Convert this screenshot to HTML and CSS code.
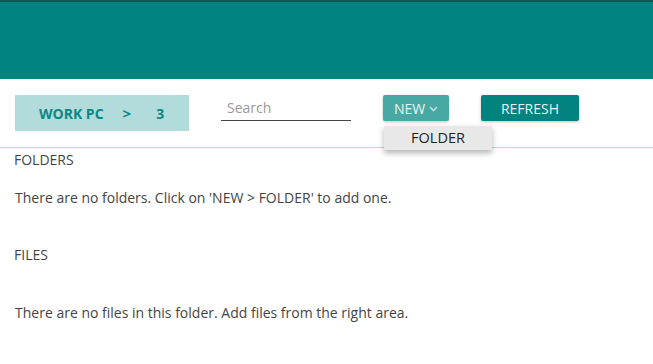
FILE: index.html
```html
<!DOCTYPE html>
<html>
<head>
<meta charset="utf-8">
<link rel="stylesheet" href="styles.css">
</head>
<body>
<header class="topbar"></header>
<div class="toolbar">
  <div class="crumbs">
    <span class="crumb">WORK PC</span>
    <span class="sep">&gt;</span>
    <span class="crumb">3</span>
  </div>
  <input class="search" type="text" placeholder="Search">
  <div class="new-wrap">
    <button class="btn btn-new">NEW <svg class="chev" width="9" height="6" viewBox="0 0 9 6"><path d="M1 1 L4.5 4.5 L8 1" fill="none" stroke="#b9e0de" stroke-width="1.6"/></svg></button>
    <div class="menu"><div class="menu-item">FOLDER</div></div>
  </div>
  <button class="btn btn-refresh">REFRESH</button>
</div>
<main class="content">
  <div class="section-title">FOLDERS</div>
  <p class="empty">There are no folders. Click on 'NEW &gt; FOLDER' to add one.</p>
  <div class="section-title files">FILES</div>
  <p class="empty files-empty">There are no files in this folder. Add files from the right area.</p>
</main>
</body>
</html>
```

FILE: styles.css
```css
* { box-sizing: border-box; }
body {
  margin: 0;
  font-family: "Open Sans", "Liberation Sans", sans-serif;
  color: #333;
  background: #fff;
}
.topbar {
  height: 79px;
  background: #038380;
  border-top: 2px solid #0b5656;
}
.toolbar {
  display: flex;
  align-items: flex-start;
  padding: 16px 0 0 15px;
  height: 69px;
  border-bottom: 1px solid #b2dcdb;
}
.crumbs {
  width: 174px;
  height: 36px;
  background: #b2dcdb;
  display: flex;
  align-items: center;
  padding-left: 24px;
  color: #0a8785;
  font-weight: 700;
  font-size: 14px;
}
.sep { margin-left: 19px; font-size: 15px; }
.crumbs .sep + .crumb { margin-left: 25px; }
.search {
  margin-left: 32px;
  width: 130px;
  height: 26px;
  border: none;
  border-bottom: 1px solid #444;
  font-family: inherit;
  font-size: 14px;
  padding: 0 0 0 6px;
  outline: none;
  color: #333;
}
.search::placeholder { color: #999; }
.new-wrap {
  margin-left: 32px;
  position: relative;
}
.btn {
  border: none;
  font-family: inherit;
  font-size: 14px;
  color: #e6f6f5;
  height: 26px;
  border-radius: 2px;
  box-shadow: 0 1px 3px rgba(0,0,0,0.25);
  padding: 0;
}
.btn-new {
  width: 66px;
  background: #48a8a4;
  display: flex;
  align-items: center;
  justify-content: center;
  gap: 4px;
}
.chev { margin-top: 1px; }
.btn-refresh {
  margin-left: 32px;
  width: 98px;
  background: #038380;
}
.menu {
  position: absolute;
  left: 1px;
  top: 31px;
  width: 108px;
  background: #e8e8e8;
  box-shadow: 0 3px 6px rgba(0,0,0,0.3);
  z-index: 2;
}
.menu-item {
  height: 24px;
  line-height: 24px;
  text-align: center;
  font-size: 14.5px;
  color: #222;
}
.content { padding: 0 14px; }
.section-title {
  font-size: 14px;
  margin-top: 2px;
  line-height: 20px;
  color: #444;
}
.empty {
  margin: 18px 0 0 1px;
  font-size: 14px;
  line-height: 20px;
  color: #444;
}
.section-title.files { margin-top: 37px; }
.files-empty { margin-top: 38px; }
```
